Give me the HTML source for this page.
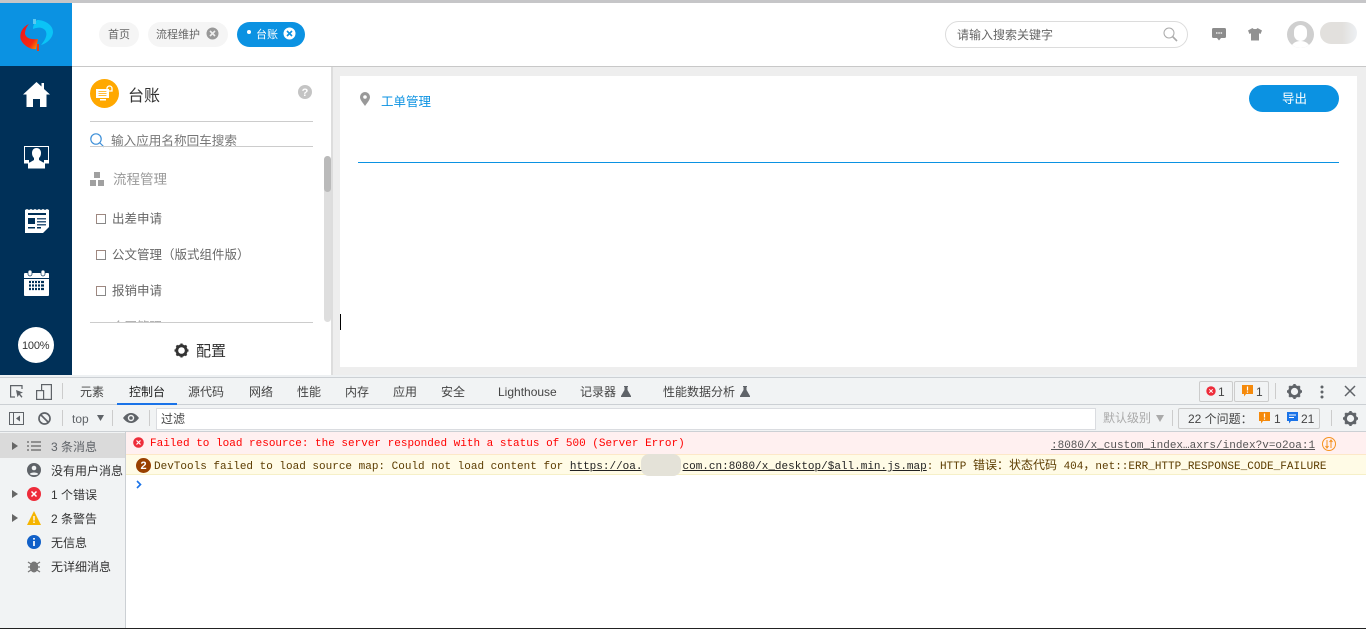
<!DOCTYPE html>
<html><head><meta charset="utf-8">
<style>
html,body{margin:0;padding:0;width:1366px;height:629px;overflow:hidden;background:#fff}
body{position:relative;font-family:"Liberation Sans","Noto Sans CJK SC",sans-serif;font-size:13px;color:#333}
.a{position:absolute}
.t{position:absolute;white-space:nowrap;line-height:1}
.m{font-family:"Liberation Mono","Noto Sans CJK SC",monospace;font-size:11px;position:absolute;white-space:nowrap;line-height:14px}
.m b{font-weight:400;font-size:12px;font-family:"Noto Sans CJK SC",sans-serif}
.dt{color:#444;font-size:12px}
svg{position:absolute;overflow:visible}
</style></head><body>
<!-- top -->
<div class="a" style="left:0;top:0;width:1366px;height:3px;background:#c6c6c8"></div>
<div class="a" style="left:0;top:3px;width:72px;height:63px;background:#0b92e2"></div>
<svg style="left:0;top:3px" width="72" height="63" viewBox="0 0 72 63">
<defs><linearGradient id="r" x1="0" x2="1" y1="0" y2="1"><stop offset="0" stop-color="#f0141c"/><stop offset=".7" stop-color="#f42a10"/><stop offset="1" stop-color="#ffa000"/></linearGradient></defs>
<path d="M29 21C22 24 19 31 21 37C24 43 31 47 36 46L38 36C31 37 26 35 25 31C25 27 27 23 29 21Z" fill="url(#r)"/>
<path d="M37 17C45 17 53 22 53 29C53 34 48 40 41 42C46 36 48 31 45 27C42 24 38 24 33 26C33 22 35 19 37 17Z" fill="#0bc4f6"/>
<rect x="33" y="16" width="3" height="5" fill="#5cc8f0"/><rect x="37" y="41" width="2" height="7" fill="#f03a14"/>
</svg>
<div class="a" style="left:0;top:66px;width:1366px;height:1px;background:#c8c8c8"></div>
<!-- tabs -->
<div class="a" style="left:99px;top:22px;width:40px;height:25px;border-radius:13px;background:#f5f5f5"></div>
<div class="t" style="left:108px;top:30px;font-size:11px;color:#666">首页</div>
<div class="a" style="left:148px;top:22px;width:80px;height:25px;border-radius:13px;background:#f5f5f5"></div>
<div class="t" style="left:156px;top:30px;font-size:11px;color:#666">流程维护</div>
<svg style="left:206px;top:27px" width="13" height="13"><circle cx="6.500" cy="6.500" r="6" fill="#999"/><path d="M4 4l5 5M9 4l-5 5" stroke="#eee" stroke-width="1.600"/></svg>
<div class="a" style="left:237px;top:22px;width:68px;height:25px;border-radius:13px;background:#0b92e2"></div>
<div class="a" style="left:247px;top:30px;width:4px;height:4px;border-radius:50%;background:#fff"></div>
<div class="t" style="left:256px;top:30px;font-size:11px;color:#fff">台账</div>
<svg style="left:283px;top:27px" width="13" height="13"><circle cx="6.500" cy="6.500" r="6" fill="#fff"/><path d="M4 4l5 5M9 4l-5 5" stroke="#0b92e2" stroke-width="1.600"/></svg>
<!-- search -->
<div class="a" style="left:945px;top:21px;width:241px;height:25px;border:1px solid #dcdcdc;border-radius:14px;background:#fff"></div>
<div class="t" style="left:957px;top:29px;font-size:12px;color:#666">请输入搜索关键字</div>
<svg style="left:1163px;top:27px" width="15" height="15" fill="none" stroke="#aaa" stroke-width="1"><circle cx="6" cy="6" r="5"/><path d="M9.500 9.500L14 14" stroke-width="1.600"/></svg>
<svg style="left:1212px;top:28px" width="14" height="13"><path d="M1.500 0h11a1.500 1.500 0 0 1 1.500 1.500v7a1.500 1.500 0 0 1-1.500 1.500H9l-2 2.500-2-2.500H1.500A1.500 1.500 0 0 1 0 8.500v-7A1.500 1.500 0 0 1 1.500 0z" fill="#8c8c8c"/><path d="M4 5h1.500M6.300 5h1.500M8.600 5h1.500" stroke="#fff" stroke-width="1.200"/></svg>
<svg style="left:1248px;top:28px" width="14" height="13"><path d="M4.500 0L0 2.500l1.500 3.500 1.500-.7V12.500h8V5.300l1.500.7L14 2.500 9.500 0C9 1.500 5 1.500 4.500 0z" fill="#919191"/></svg>
<div class="a" style="left:1287px;top:21px;width:27px;height:27px;border-radius:50%;background:#cfcfcf;overflow:hidden">
<div class="a" style="left:7px;top:4px;width:13px;height:16px;border-radius:7px;background:#fff"></div>
<div class="a" style="left:3px;top:20px;width:21px;height:12px;border-radius:10px 10px 0 0;background:#fff"></div></div>
<div class="a" style="left:1320px;top:22px;width:37px;height:22px;border-radius:11px;background:linear-gradient(90deg,#e2e0dd 0,#e2e0dd 60%,#edf0f3 100%)"></div>
<!-- left nav -->
<div class="a" style="left:0;top:66px;width:72px;height:309px;background:#003058"></div>
<svg style="left:23px;top:81px" width="27" height="26" fill="#fff"><path d="M13.500 1L0 13.500h3.500V26h6.500v-8h7v8h6.500V13.500H27L21 8V2h-2.500v3.500z"/></svg>
<svg style="left:24px;top:146px" width="25" height="23"><rect x=".5" y=".5" width="24" height="16.500" fill="#003058" stroke="#fff"/><path d="M12.500 2c3 0 4.500 2.300 4.500 5 0 2.500-1 4-2 5v2l6 3.500V22.500H4V17.500l6-3.500v-2c-1-1-2-2.500-2-5 0-2.700 1.500-5 4.500-5z" fill="#fff"/><rect x="1" y="14" width="4" height="3" fill="#fff"/><rect x="20" y="14" width="4" height="3" fill="#fff"/></svg>
<svg style="left:25px;top:209px" width="24" height="24"><path d="M0 1l2-1 2 1 2-1 2 1 2-1 2 1 2-1 2 1 2-1 2 1 2-1 2 1v17l-6 6H0z" fill="#fff"/><rect x="3" y="4" width="18" height="2" fill="#003058"/><rect x="3" y="9" width="7" height="6" fill="#003058"/><rect x="12" y="9" width="9" height="1.500" fill="#345a7c"/><rect x="12" y="12" width="9" height="1.500" fill="#345a7c"/><rect x="12" y="15" width="9" height="1.500" fill="#345a7c"/><rect x="3" y="18" width="7" height="1.500" fill="#003058"/><rect x="12" y="18" width="4" height="1.500" fill="#003058"/></svg>
<svg style="left:24px;top:270px" width="26" height="26"><rect x="0" y="3" width="25" height="23" rx="1" fill="#fff"/><rect x="0" y="8" width="25" height="1" fill="#003058"/><rect x="4" y="0" width="4" height="6" rx="2" fill="#fff" stroke="#003058" stroke-width=".7"/><rect x="17" y="0" width="4" height="6" rx="2" fill="#fff" stroke="#003058" stroke-width=".7"/><path d="M5 12h15M5 15.500h15M5 19h15" stroke="#003058" stroke-width="2.200"/><path d="M7.500 11v10M10.500 11v10M13.500 11v10M16.500 11v10" stroke="#fff" stroke-width="1"/></svg>
<div class="a" style="left:18px;top:327px;width:36px;height:36px;border-radius:50%;background:#fff"></div>
<div class="t" style="left:22px;top:340px;font-size:11px;color:#333;letter-spacing:-.2px;margin-top:1px">100%</div>
<!-- panel -->
<div class="a" style="left:331px;top:67px;width:1035px;height:309px;background:#eee"></div>
<div class="a" style="left:331px;top:67px;width:2px;height:309px;background:#ddd"></div>
<div class="a" style="left:324px;top:156px;width:7px;height:166px;border-radius:4px;background:#dedede"></div>
<div class="a" style="left:324px;top:156px;width:7px;height:36px;border-radius:4px;background:#bababa"></div>
<div class="a" style="left:90px;top:79px;width:29px;height:29px;border-radius:50%;background:#ffa800"></div>
<svg style="left:96px;top:86px" width="18" height="16"><rect x="0" y="3" width="13" height="9" fill="#fff"/><path d="M2.500 5.500h8M2.500 7.500h8M2.500 9.500h8" stroke="#ffa800" stroke-width=".8"/><rect x="4" y="13" width="6" height="1.500" fill="#fff"/><path d="M11 5V2.500a2.500 2.500 0 0 1 5 0V5h-5z" fill="none" stroke="#fff" stroke-width="1.300"/></svg>
<div class="t" style="left:128px;top:87px;font-size:16px;color:#333;margin-top:2px">台账</div>
<svg style="left:298px;top:85px" width="14" height="14"><circle cx="7" cy="7" r="7" fill="#c4c4c4"/><text x="7" y="11" text-anchor="middle" font-family="Liberation Sans" font-weight="700" font-size="11" fill="#fff">?</text></svg>
<div class="a" style="left:90px;top:121px;width:223px;height:1px;background:#ccc"></div>
<svg style="left:90px;top:133px" width="15" height="15" fill="none" stroke="#3d8fd8" stroke-width="1.200"><circle cx="6" cy="6" r="5.200"/><path d="M10 10L14 14"/></svg>
<div class="t" style="left:111px;top:135px;font-size:12.600px;color:#777">输入应用名称回车搜索</div>
<div class="a" style="left:90px;top:146px;width:223px;height:1px;background:#ccc"></div>
<svg style="left:90px;top:171px" width="15" height="15" fill="#a0a0a0"><rect x="4" y="1" width="6" height="6"/><rect x="0" y="9" width="6" height="6"/><rect x="8" y="9" width="6" height="6"/></svg>
<div class="t" style="left:113px;top:173px;font-size:13.500px;color:#999">流程管理</div>
<div class="a" style="left:96px;top:214px;width:8px;height:8px;border:1px solid #888;border-color:#a08880 #888 #888 #a08880"></div>
<div class="t" style="left:112px;top:213px;font-size:12.500px;color:#666">出差申请</div>
<div class="a" style="left:96px;top:250px;width:8px;height:8px;border:1px solid #888;border-color:#a08880 #888 #888 #a08880"></div>
<div class="t" style="left:112px;top:249px;font-size:12.500px;color:#666">公文管理（版式组件版）</div>
<div class="a" style="left:96px;top:286px;width:8px;height:8px;border:1px solid #888;border-color:#a08880 #888 #888 #a08880"></div>
<div class="t" style="left:112px;top:285px;font-size:12.500px;color:#666">报销申请</div>
<div class="a" style="left:90px;top:312px;width:223px;height:10px;overflow:hidden"><div class="t" style="left:22px;top:9px;font-size:12.500px;color:#aaa">合同管理</div></div>
<div class="a" style="left:90px;top:322px;width:223px;height:1px;background:#ccc"></div>
<svg style="left:174px;top:343px" width="15" height="15" viewBox="0 0 15 15"><circle cx="7.500" cy="7.500" r="4.700" fill="none" stroke="#333" stroke-width="2.800"/><path d="M7.500 .5v2.500M7.500 12v2.500M.5 7.500H3M12 7.500h2.500M2.500 2.500l2 2M10.500 10.500l2 2M12.500 2.500l-2 2M4.500 10.500l-2 2" stroke="#333" stroke-width="2.200"/></svg>
<div class="t" style="left:196px;top:344px;font-size:15px;color:#333">配置</div>
<!-- main -->
<div class="a" style="left:340px;top:76px;width:1017px;height:291px;background:#fff"></div>
<svg style="left:360px;top:92px" width="10" height="14"><path d="M5 0a5 5 0 0 1 5 5c0 3-3 6-5 9-2-3-5-6-5-9a5 5 0 0 1 5-5z" fill="#999"/><circle cx="5" cy="5" r="1.800" fill="#fff"/></svg>
<div class="t" style="left:381px;top:96px;font-size:12.500px;color:#0b92e2">工单管理</div>
<div class="a" style="left:1249px;top:85px;width:90px;height:27px;border-radius:14px;background:#0b92e2"></div>
<div class="t" style="left:1282px;top:93px;font-size:12.500px;color:#fff">导出</div>
<div class="a" style="left:358px;top:162px;width:981px;height:1px;background:#0b92e2"></div>
<div class="a" style="left:340px;top:314px;width:1px;height:16px;background:#000"></div>
<!-- devtools -->
<div class="a" style="left:0;top:375px;width:1366px;height:3px;background:#eef1f3"></div>
<div class="a" style="left:0;top:377px;width:1366px;height:1px;background:#ccd0d4"></div>
<div class="a" style="left:0;top:378px;width:1366px;height:26px;background:#f1f3f4"></div>
<div class="a" style="left:0;top:404px;width:1366px;height:1px;background:#ccd0d4"></div>
<div class="a" style="left:0;top:405px;width:1366px;height:26px;background:#f1f3f4"></div>
<div class="a" style="left:0;top:431px;width:1366px;height:1px;background:#ccd0d4"></div>
<svg style="left:10px;top:385px" width="14" height="14" fill="none" stroke="#5f6368" stroke-width="1.200"><path d="M5 12H.6V.6H12V4"/><path d="M6 5l7 2.500-3 1.200 2.500 3-1 1-2.500-3-1.500 2.500z" fill="#5f6368" stroke="none"/></svg>
<svg style="left:36px;top:384px" width="16" height="16" fill="none" stroke="#5f6368" stroke-width="1.200"><rect x="5.600" y=".6" width="9.800" height="14.800"/><rect x=".6" y="6.600" width="7" height="8.800" fill="#f1f3f4"/></svg>
<div class="a" style="left:62px;top:383px;width:1px;height:16px;background:#ccc"></div>
<div class="t dt" style="left:80px;top:386px">元素</div>
<div class="t dt" style="left:129px;top:386px;color:#222">控制台</div>
<div class="a" style="left:117px;top:403px;width:60px;height:2px;background:#1a73e8"></div>
<div class="t dt" style="left:188px;top:386px">源代码</div>
<div class="t dt" style="left:249px;top:386px">网络</div>
<div class="t dt" style="left:297px;top:386px">性能</div>
<div class="t dt" style="left:345px;top:386px">内存</div>
<div class="t dt" style="left:393px;top:386px">应用</div>
<div class="t dt" style="left:441px;top:386px">安全</div>
<div class="t dt" style="left:498px;top:386px">Lighthouse</div>
<div class="t dt" style="left:580px;top:386px">记录器</div>
<svg style="left:621px;top:386px" width="10" height="11" fill="#5f6368"><path d="M3 0h4v1H6.500v3L10 10v1H0v-1l3.500-6V1H3z"/></svg>
<div class="t dt" style="left:663px;top:386px">性能数据分析</div>
<svg style="left:740px;top:386px" width="10" height="11" fill="#5f6368"><path d="M3 0h4v1H6.500v3L10 10v1H0v-1l3.500-6V1H3z"/></svg>
<!-- right of tb1 -->
<div class="a" style="left:1199px;top:381px;width:32px;height:19px;border:1px solid #ccc;border-radius:2px"></div>
<svg style="left:1206px;top:386px" width="10" height="10"><circle cx="5" cy="5" r="4.700" fill="#ee2c3a"/><path d="M3.300 3.300l3.400 3.400M6.700 3.300l-3.400 3.400" stroke="#fff"/></svg>
<div class="t dt" style="left:1218px;top:386px">1</div>
<div class="a" style="left:1234px;top:381px;width:33px;height:19px;border:1px solid #ccc;border-radius:2px"></div>
<svg style="left:1242px;top:385px" width="11" height="12"><path d="M0 0h11v9H4l-2 2.500V9H0z" fill="#f58a0c"/><path d="M5.500 1.500v4M5.500 6.500v1.200" stroke="#fff" stroke-width="1.200"/></svg>
<div class="t dt" style="left:1256px;top:386px">1</div>
<div class="a" style="left:1275px;top:383px;width:1px;height:16px;background:#ccc"></div>
<svg style="left:1287px;top:384px" width="15" height="15" viewBox="0 0 15 15"><circle cx="7.500" cy="7.500" r="5" fill="none" stroke="#5f6368" stroke-width="2.800"/><path d="M7.500 0v3M7.500 12v3M0 7.500h3M12 7.500h3M2.200 2.200l2 2M10.800 10.800l2 2M12.800 2.200l-2 2M4.200 10.800l-2 2" stroke="#5f6368" stroke-width="2.400"/></svg>
<svg style="left:1320px;top:385px" width="4" height="14" fill="#5f6368"><circle cx="2" cy="2" r="1.500"/><circle cx="2" cy="7" r="1.500"/><circle cx="2" cy="12" r="1.500"/></svg>
<svg style="left:1345px;top:386px" width="10" height="10" stroke="#5f6368" stroke-width="1.500"><path d="M0 0l10 10M10 0L0 10"/></svg>
<!-- toolbar 2 -->
<svg style="left:9px;top:412px" width="15" height="13" fill="none" stroke="#5f6368" stroke-width="1"><rect x=".5" y=".5" width="14" height="12"/><path d="M4.500 .5v12"/><path d="M11 3.500v6L7 6.500z" fill="#5f6368" stroke="none"/></svg>
<svg style="left:38px;top:412px" width="13" height="13" fill="none" stroke="#5f6368" stroke-width="1.700"><circle cx="6.500" cy="6.500" r="5.500"/><path d="M2.500 2.500l8 8"/></svg>
<div class="a" style="left:62px;top:410px;width:1px;height:16px;background:#ccc"></div>
<div class="t dt" style="left:72px;top:413px;color:#5f6368">top</div>
<svg style="left:97px;top:415px" width="7" height="6"><path d="M0 0h7L3.500 6z" fill="#5f6368"/></svg>
<div class="a" style="left:112px;top:410px;width:1px;height:16px;background:#ccc"></div>
<svg style="left:123px;top:413px" width="16" height="10"><path d="M0 5C3 1 5.500 0 8 0s5 1 8 5c-3 4-5.500 5-8 5s-5-1-8-5z" fill="#5f6368"/><circle cx="8" cy="5" r="3.200" fill="#f1f3f4"/><circle cx="8" cy="5" r="1.800" fill="#5f6368"/></svg>
<div class="a" style="left:149px;top:410px;width:1px;height:16px;background:#ccc"></div>
<div class="a" style="left:156px;top:408px;width:938px;height:20px;background:#fff;border:1px solid #dadce0"></div>
<div class="t dt" style="left:161px;top:413px;color:#444">过滤</div>
<div class="t dt" style="left:1103px;top:412px;color:#aaa">默认级别</div>
<svg style="left:1156px;top:415px" width="8" height="7"><path d="M0 0h8L4 7z" fill="#aaa"/></svg>
<div class="a" style="left:1172px;top:410px;width:1px;height:16px;background:#ccc"></div>
<div class="a" style="left:1178px;top:408px;width:140px;height:19px;border:1px solid #ccc;border-radius:2px"></div>
<div class="t dt" style="left:1188px;top:413px">22 个问题：</div>
<svg style="left:1259px;top:412px" width="11" height="12"><path d="M0 0h11v9H4l-2 2.500V9H0z" fill="#f58a0c"/><path d="M5.500 1.500v4M5.500 6.500v1.200" stroke="#fff" stroke-width="1.200"/></svg>
<div class="t dt" style="left:1274px;top:413px">1</div>
<svg style="left:1287px;top:412px" width="11" height="12"><path d="M0 0h11v9H4l-2 2.500V9H0z" fill="#1a73e8"/><path d="M2 3h7M2 5.500h5" stroke="#fff"/></svg>
<div class="t dt" style="left:1301px;top:413px">21</div>
<div class="a" style="left:1331px;top:410px;width:1px;height:16px;background:#ccc"></div>
<svg style="left:1343px;top:411px" width="15" height="15" viewBox="0 0 15 15"><circle cx="7.500" cy="7.500" r="5" fill="none" stroke="#5f6368" stroke-width="2.800"/><path d="M7.500 0v3M7.500 12v3M0 7.500h3M12 7.500h3M2.200 2.200l2 2M10.800 10.800l2 2M12.800 2.200l-2 2M4.200 10.800l-2 2" stroke="#5f6368" stroke-width="2.400"/></svg>
<!-- sidebar -->
<div class="a" style="left:0;top:432px;width:125px;height:196px;background:#f1f3f4"></div>
<div class="a" style="left:125px;top:432px;width:1px;height:196px;background:#ccd0d4"></div>
<div class="a" style="left:0;top:433px;width:125px;height:25px;background:#dadada"></div>
<svg style="left:12px;top:442px" width="6" height="8"><path d="M0 0l6 4-6 4z" fill="#666"/></svg>
<svg style="left:27px;top:441px" width="14" height="10" stroke="#777" stroke-width="1.600"><path d="M0 1h2M4 1h10M0 5h2M4 5h10M0 9h2M4 9h10"/></svg>
<div class="t dt" style="left:51px;top:441px;color:#5f6368">3 条消息</div>
<svg style="left:27px;top:463px" width="14" height="14"><circle cx="7" cy="7" r="7" fill="#5f6368"/><circle cx="7" cy="5" r="2.300" fill="#f1f3f4"/><path d="M2.800 11c1-2 7.400-2 8.400 0-1 1.500-7.400 1.500-8.400 0z" fill="#f1f3f4"/></svg>
<div class="t dt" style="left:51px;top:465px;color:#333">没有用户消息</div>
<svg style="left:12px;top:490px" width="6" height="8"><path d="M0 0l6 4-6 4z" fill="#666"/></svg>
<svg style="left:27px;top:487px" width="14" height="14"><circle cx="7" cy="7" r="7" fill="#ee2c3a"/><path d="M4.500 4.500l5 5M9.500 4.500l-5 5" stroke="#fff" stroke-width="1.500"/></svg>
<div class="t dt" style="left:51px;top:489px;color:#333">1 个错误</div>
<svg style="left:12px;top:514px" width="6" height="8"><path d="M0 0l6 4-6 4z" fill="#666"/></svg>
<svg style="left:27px;top:511px" width="14" height="14"><path d="M7 0l7 14H0z" fill="#f5b400"/><path d="M7 5v4.500M7 10.500V12" stroke="#fff" stroke-width="1.400"/></svg>
<div class="t dt" style="left:51px;top:513px;color:#333">2 条警告</div>
<svg style="left:27px;top:535px" width="14" height="14"><circle cx="7" cy="7" r="7" fill="#1160c8"/><path d="M7 6v5M7 3v1.600" stroke="#fff" stroke-width="1.700"/></svg>
<div class="t dt" style="left:51px;top:537px;color:#333">无信息</div>
<svg style="left:28px;top:559px" width="12" height="14" fill="#777"><ellipse cx="6" cy="8" rx="4.200" ry="5.500"/><path d="M0 3l3 2M12 3L9 5M0 8h3M12 8H9M0 13l3-2M12 13l-3-2" stroke="#777" stroke-width="1.300"/></svg>
<div class="t dt" style="left:51px;top:561px;color:#333">无详细消息</div>
<!-- console -->
<div class="a" style="left:126px;top:432px;width:1240px;height:22px;background:#fff0f0"></div>
<div class="a" style="left:126px;top:454px;width:1240px;height:1px;background:#fde8c8"></div>
<div class="a" style="left:126px;top:455px;width:1240px;height:19px;background:#fffbe6"></div>
<div class="a" style="left:126px;top:474px;width:1240px;height:1px;background:#f6f0c8"></div>
<svg style="left:133px;top:437px" width="11" height="11"><circle cx="5.500" cy="5.500" r="5.300" fill="#ee2c3a"/><path d="M3.500 3.500l4 4M7.500 3.500l-4 4" stroke="#fff" stroke-width="1.200"/></svg>
<div class="m" style="left:150px;top:437px;color:#f00">Failed to load resource: the server responded with a status of 500 (Server Error)</div>
<div class="m" style="left:1051px;top:439px;color:#555;text-decoration:underline">:8080/x_custom_index…axrs/index?v=o2oa:1</div>
<svg style="left:1322px;top:437px" width="14" height="14" fill="none" stroke="#f5921e" stroke-width="1"><circle cx="7" cy="7" r="6.500"/><path d="M5 3v8M3.500 9L5 11 6.500 9M9 11V3M7.500 5L9 3l1.500 2"/></svg>
<div class="a" style="left:136px;top:458px;width:15px;height:15px;border-radius:50%;background:#994000;color:#fff;font-size:11px;font-weight:700;line-height:16px;text-align:center">2</div>
<div class="m" style="left:154px;top:458px;color:#5c3c00">DevTools failed to load source map: Could not load content for <span style="color:#222;text-decoration:underline">https://oa.<span style="display:inline-block;width:40px"></span>com.cn:8080/x_desktop/$all.min.js.map</span>: HTTP <b>错误：状态代码</b> 404<b>，</b>net::ERR_HTTP_RESPONSE_CODE_FAILURE</div>
<div class="a" style="left:641px;top:454px;width:40px;height:22px;border-radius:8px;background:#e4e2d8"></div>
<svg style="left:136px;top:480px" width="6" height="9" fill="none" stroke="#1a73e8" stroke-width="1.600"><path d="M1 1l3.500 3.500L1 8"/></svg>
<div class="a" style="left:0;top:628px;width:1366px;height:1px;background:#222"></div>
</body></html>
